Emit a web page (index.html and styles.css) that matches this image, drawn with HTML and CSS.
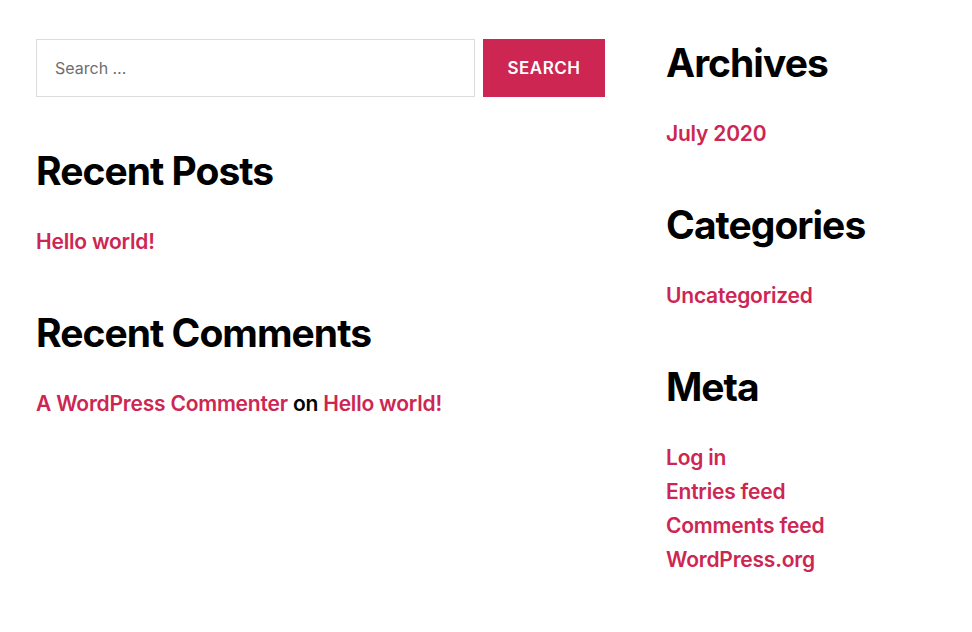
FILE: index.html
```html
<!DOCTYPE html>
<html lang="en">
<head>
<meta charset="utf-8">
<title>Widgets</title>
<link rel="stylesheet" href="styles.css">
</head>
<body>
<div class="widgets">
  <div class="col col-left">
    <form class="search-form" onsubmit="return false">
      <input class="search-field" type="search" placeholder="Search …">
      <button class="search-submit" type="submit">Search</button>
    </form>
    <section class="widget">
      <h2 class="widget-title">Recent Posts</h2>
      <ul class="widget-list">
        <li><a href="#">Hello world!</a></li>
      </ul>
    </section>
    <section class="widget">
      <h2 class="widget-title">Recent Comments</h2>
      <ul class="widget-list">
        <li><a href="#">A WordPress Commenter</a> on <a href="#">Hello world!</a></li>
      </ul>
    </section>
  </div>
  <div class="col col-right">
    <section class="widget">
      <h2 class="widget-title">Archives</h2>
      <ul class="widget-list">
        <li><a href="#">July 2020</a></li>
      </ul>
    </section>
    <section class="widget">
      <h2 class="widget-title">Categories</h2>
      <ul class="widget-list">
        <li><a href="#">Uncategorized</a></li>
      </ul>
    </section>
    <section class="widget">
      <h2 class="widget-title">Meta</h2>
      <ul class="widget-list">
        <li><a href="#">Log in</a></li>
        <li><a href="#">Entries feed</a></li>
        <li><a href="#">Comments feed</a></li>
        <li><a href="#">WordPress.org</a></li>
      </ul>
    </section>
  </div>
</div>
</body>
</html>
```

FILE: styles.css
```css
* { box-sizing: border-box; }
html, body { margin: 0; padding: 0; background: #fff; }
body {
  font-family: Inter, "Noto Sans", sans-serif;
  color: #000;
}
.widgets {
  display: grid;
  grid-template-columns: 570px 270px;
  column-gap: 60px;
  padding: 39px 36px 0 36px;
}
.col { display: flex; flex-direction: column; gap: 50px; }
.search-form { display: flex; gap: 8px; }
.search-field {
  width: 439px;
  height: 58px;
  border: 1px solid #dcdcdc;
  border-radius: 0;
  padding: 0 18px;
  font-family: Inter, sans-serif;
  font-size: 16px;
  color: #000;
  outline: none;
}
.search-field::placeholder { color: #6d6d6d; }
.search-submit {
  width: 122px;
  height: 58px;
  border: 0;
  background: #cd2653;
  color: #fff;
  font-family: Inter, sans-serif;
  font-size: 17px;
  font-weight: 600;
  letter-spacing: 0.03em;
  text-transform: uppercase;
  padding: 0;
}
.widget-title {
  margin: 0 0 30px;
  font-size: 39px;
  line-height: 48px;
  font-weight: 700;
  letter-spacing: -0.025em;
}
.widget-list {
  list-style: none;
  margin: 0;
  padding: 0;
  font-size: 21px;
  line-height: 34px;
  font-weight: 600;
  letter-spacing: -0.01em;
}
.widget-list a { color: #cd2653; text-decoration: none; }
```
